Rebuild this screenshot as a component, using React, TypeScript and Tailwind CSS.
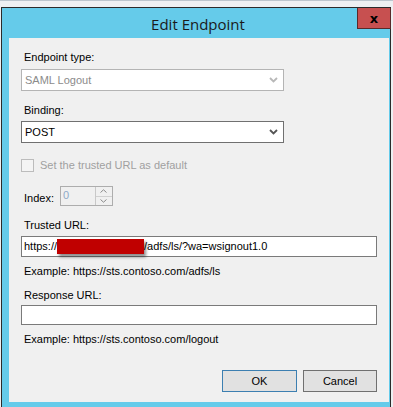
import React from "react";

function Chevron({ color }: { color: string }) {
  return (
    <svg width="9" height="6" viewBox="0 0 9 6" className="block">
      <polyline points="1,1 4.5,4.5 8,1" fill="none" stroke={color} strokeWidth="1.8" />
    </svg>
  );
}

export default function App() {
  return (
    <div className="w-[393px] h-[407px] bg-[#eef0f2] overflow-hidden font-['Liberation_Sans',Arial,sans-serif] text-[11px] leading-[13px] text-black">
      <div className="h-[1px] bg-[#bcc6ce]" />
      <div className="mt-[6px] ml-[1px] w-[390px] h-[400px] border-l border-t border-r border-[#2b2b2b] bg-[#65cbea] flex flex-col">
        {/* title bar */}
        <div className="relative h-[30px] flex items-center justify-center">
          <span className="font-['Open_Sans',sans-serif] text-[15px] leading-[20px] text-[#1a1a1a] ml-[4px] mt-[1px]">
            Edit Endpoint
          </span>
          <div className="absolute right-[-1px] top-0 w-[34px] h-[21px] bg-[#c75050] border border-[#5a2a2a] border-t-0 flex items-center justify-center">
            <span className="font-['DejaVu_Sans',sans-serif] font-bold text-[13px] leading-[13px] text-black">x</span>
          </div>
        </div>
        {/* content */}
        <div className="ml-[7px] w-[380px] h-[364px] bg-[#f0f0f0] flex flex-col pl-[12px]">
          <div className="mt-[13px] ml-[3px] h-[13px]">Endpoint type:</div>
          <div className="mt-[5px] w-[263px] h-[22px] bg-white border border-[#b4b4b4] flex items-center justify-between pl-[3px] pr-[5px]">
            <span className="text-[#8b8b8b]">SAML Logout</span>
            <Chevron color="#b8b8b8" />
          </div>
          <div className="mt-[13px] ml-[3px] h-[13px]">Binding:</div>
          <div className="mt-[4px] w-[263px] h-[22px] bg-white border border-[#707070] flex items-center justify-between pl-[3px] pr-[5px]">
            <span>POST</span>
            <Chevron color="#555555" />
          </div>
          <div className="mt-[15px] h-[14px] flex items-center">
            <div className="w-[13px] h-[13px] border border-[#bcbcbc] bg-[#f4f4f4]" />
            <span className="ml-[6px] text-[#a0a0a0]">Set the trusted URL as default</span>
          </div>
          <div className="mt-[14px] flex items-center">
            <span className="ml-[3px] mt-[5px]">Index:</span>
            <div className="ml-[6px] w-[53px] h-[20px] border border-[#adadad] bg-[#f0f0f0] flex">
              <div className="flex-1 pl-[2px] pt-[2px] text-[#8faac8]">0</div>
              <div className="w-[17px] border-l border-[#c8c8c8] flex flex-col">
                <div className="flex-1 flex items-center justify-center border-b border-[#d0d0d0]">
                  <svg width="7" height="4" viewBox="0 0 7 4"><polyline points="0.5,3.5 3.5,0.8 6.5,3.5" fill="none" stroke="#8a8a8a" strokeWidth="1" /></svg>
                </div>
                <div className="flex-1 flex items-center justify-center">
                  <svg width="7" height="4" viewBox="0 0 7 4"><polyline points="0.5,0.5 3.5,3.2 6.5,0.5" fill="none" stroke="#8a8a8a" strokeWidth="1" /></svg>
                </div>
              </div>
            </div>
          </div>
          <div className="mt-[13px] ml-[3px] h-[13px]">Trusted URL:</div>
          <div className="mt-[4px] w-[356px] h-[21px] bg-white border border-[#7a7a7a] flex items-center pl-[2px] whitespace-nowrap">
            <span>https://</span>
            <span className="inline-block w-[87px] h-[15px] bg-[#c00000] shadow-[2px_3px_3px_rgba(0,0,0,0.45)]" />
            <span>/adfs/ls/?wa=wsignout1.0</span>
          </div>
          <div className="mt-[8px] ml-[3px] h-[13px]">Example: https://sts.contoso.com/adfs/ls</div>
          <div className="mt-[11px] ml-[3px] h-[13px]">Response URL:</div>
          <div className="mt-[3px] w-[356px] h-[20px] bg-white border border-[#7a7a7a]" />
          <div className="mt-[8px] ml-[3px] h-[13px]">Example: https://sts.contoso.com/logout</div>
          <div className="mt-[24px] flex justify-end gap-[6px] pr-[12px]">
            <button className="w-[75px] h-[22px] bg-[#e1e1e1] border border-[#3c7fb1] text-[11px] leading-[13px] font-['Liberation_Sans',Arial,sans-serif]">OK</button>
            <button className="w-[74px] h-[22px] bg-[#e1e1e1] border border-[#707070] text-[11px] leading-[13px] font-['Liberation_Sans',Arial,sans-serif]">Cancel</button>
          </div>
        </div>
      </div>
    </div>
  );
}
